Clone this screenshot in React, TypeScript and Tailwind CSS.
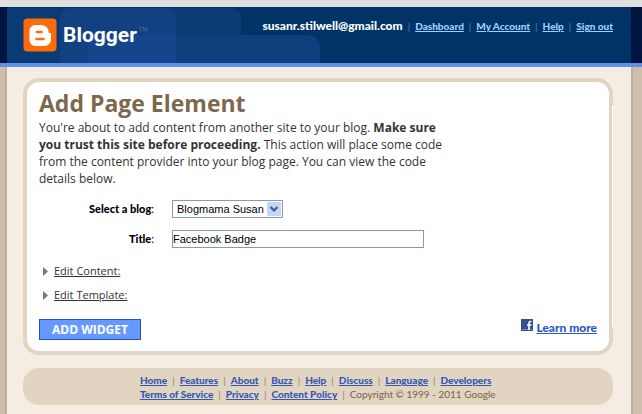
import type { ReactNode } from 'react';

const accountLinks = ['Dashboard', 'My Account', 'Help', 'Sign out'];
const siteLinks = ['Home', 'Features', 'About', 'Buzz', 'Help', 'Discuss', 'Language', 'Developers'];
const legalLinks = ['Terms of Service', 'Privacy', 'Content Policy'];

function BloggerMark() {
  return (
    <svg viewBox="0 0 34 34" className="size-[34px] shrink-0" aria-hidden="true">
      <rect x="0.5" y="0.5" width="33" height="33" rx="4" fill="#ff6a0c" />
      <path
        fill="#fff"
        d="M12.500 7H18C22.500 7 25.500 10 25.500 13.500C25.500 14.500 26 15 27 15C27.700 15 28 15.500 28 16V21.500C28 25 25 28 21.500 28H12.500C9 28 6.500 25 6.500 22V13C6.500 9.500 9 7 12.500 7Z"
      />
      <path d="M14 14H18.500M13.500 21H20.500" stroke="#ff6a0c" strokeWidth="2.600" strokeLinecap="round" />
    </svg>
  );
}

function HeaderArt() {
  return (
    <svg className="absolute left-0 top-0 h-full w-[320px]" viewBox="0 0 320 56" preserveAspectRatio="xMinYMin slice" aria-hidden="true">
      <path d="M7 1H229Q241 1 241 13V56H7Z" fill="#0a3b74" />
      <path d="M88 28H306Q320 28 320 42V56H88Z" fill="#0e3e7b" />
      <path d="M60 13Q60 1 72 1H164Q176 1 176 13V56H60Z" fill="#124182" />
      <path d="M88 28H176V56H88Z" fill="#15468c" />
    </svg>
  );
}

function FacebookMark() {
  return (
    <svg viewBox="0 0 12 12" className="size-3" aria-hidden="true">
      <rect width="12" height="12" fill="#35528f" />
      <path d="M1 10.500H11" stroke="#7489b8" />
      <path d="M10.500 2.500H9.500Q8 2.500 8 4V11M6 6H10.500" stroke="#fff" strokeWidth="1.600" fill="none" />
    </svg>
  );
}

function LinkList({ items, className }: { items: string[]; className: string }) {
  return (
    <>
      {items.map((item, i) => (
        <span key={item}>
          {i > 0 && <span className="px-[5px] font-normal opacity-70">|</span>}
          <a href="#" className={className}>{item}</a>
        </span>
      ))}
    </>
  );
}

function Field({ id, label, children }: { id: string; label: string; children: ReactNode }) {
  return (
    <div className="flex items-center">
      <label htmlFor={id} className="w-[115px] shrink-0 text-right font-['Lato',sans-serif] text-[11px] font-black leading-4 text-black">
        {label}<span className="font-normal">:</span>
      </label>
      <div className="min-w-0 flex-1 pl-[18px]">{children}</div>
    </div>
  );
}

function Disclosure({ label }: { label: string }) {
  return (
    <button type="button" className="flex items-center gap-1.5 text-[11px] leading-4 text-[#333]">
      <svg viewBox="0 0 5 9" className="h-[9px] w-[5px]" aria-hidden="true">
        <path d="M0 0L5 4.500L0 9Z" fill="#777" />
      </svg>
      <span className="underline">{label}</span>
    </button>
  );
}

export default function App() {
  return (
    <div className="min-h-screen bg-[#f5ece2] font-['Open_Sans',sans-serif] text-[#333]">
      <div className="h-[7px] bg-[#dfdfdf]" />
      <header className="relative h-[60px] border-b-4 border-[#5f8fec] bg-[#003366]">
        <HeaderArt />
        <div className="relative flex h-full items-start justify-between border-l-[7px] border-r-[11px] border-l-[#001440] border-r-[#001440] pl-4 pr-[18px]">
          <a href="#" className="flex items-center gap-1.5 pt-[11px] text-white">
            <BloggerMark />
            <span className="flex items-start">
              <span className="font-['Roboto',sans-serif] text-[21px] font-bold leading-7">Blogger</span>
              <span className="pl-0.5 text-[6px] leading-4 text-[#4b75ad]">TM</span>
            </span>
          </a>
          <nav className="whitespace-nowrap pt-[11px] font-['Lato',sans-serif] text-[10px] leading-4 text-[#7f9fc4]">
            <b className="text-[12px] font-black text-white">susanr.stilwell@gmail.com</b>
            <span className="px-[5px] opacity-70">|</span>
            <LinkList items={accountLinks} className="font-black text-[#9fd0ff] underline" />
          </nav>
        </div>
      </header>

      <div className="border-l-[5px] border-r-[9px] border-[#cfbeac]">
        <div className="min-h-[347px] border-x-2 border-[#c0ae9b] pl-4 pr-[18px] pt-[11px]">
          <main className="relative rounded-2xl border-4 border-[#e1d4c0] bg-white px-3 pb-[11px] pt-1.5">
            <span className="absolute -right-1 bottom-6 top-6 w-px bg-white" />
            <h1 className="text-[23px] font-bold leading-[31px] text-[#7f674c]">Add Page Element</h1>
            <p className="max-w-[410px] text-[12px] leading-[17px]">
              You're about to add content from another site to your blog. <b>Make sure you trust this site before proceeding.</b>{' '}
              This action will place some code from the content provider into your blog page. You can view the code details below.
            </p>

            <form className="mt-[13px]" onSubmit={(e) => e.preventDefault()}>
              <div className="flex flex-col gap-3">
                <Field id="blog" label="Select a blog">
                  <div className="relative w-[111px]">
                    <select id="blog" className="block h-[18px] w-full appearance-none border border-[#7f9db9] bg-white pl-1 font-['Liberation_Sans',sans-serif] text-[11px] leading-4 text-black">
                      <option>Blogmama Susan</option>
                    </select>
                    <svg viewBox="0 0 14 14" className="pointer-events-none absolute right-0.5 top-0.5 size-3.5" aria-hidden="true">
                      <rect width="14" height="14" rx="1" fill="#c4d5fb" />
                      <path d="M3.500 5L7 8.500L10.500 5" stroke="#445b8c" strokeWidth="2.200" fill="none" />
                    </svg>
                  </div>
                </Field>
                <Field id="title" label="Title">
                  <input id="title" defaultValue="Facebook Badge" className="block h-[18px] w-[252px] max-w-full border border-[#7f9db9] bg-white font-['Liberation_Sans',sans-serif] text-[11px] text-black" />
                </Field>
              </div>
              <div className="mt-[15px] flex flex-col gap-2 pl-1">
                <Disclosure label="Edit Content:" />
                <Disclosure label="Edit Template:" />
              </div>
              <div className="mt-4 flex items-start justify-between">
                <button type="submit" className="h-[21px] border border-[#2a52a5] bg-[#6699ff] px-3 text-[12px] font-bold leading-4 text-white">ADD WIDGET</button>
                <a href="#" className="flex items-start gap-[3px] font-['Lato',sans-serif] text-[12px] font-black leading-[18px] text-[#2a58c4]">
                  <FacebookMark />
                  <span className="underline">Learn more</span>
                </a>
              </div>
            </form>
          </main>

          <footer className="mt-[13px] rounded-2xl bg-[#e1d4c0] pb-1 pl-[117px] pt-[5px] font-['Lato',sans-serif] text-[10px] leading-[14px] text-[#75634d]">
            <div><LinkList items={siteLinks} className="font-black text-[#3558b5] underline" /></div>
            <div>
              <LinkList items={legalLinks} className="font-black text-[#3558b5] underline" />
              <span className="px-[5px] opacity-70">|</span>Copyright © 1999 - 2011 Google
            </div>
          </footer>
        </div>
      </div>
    </div>
  );
}
